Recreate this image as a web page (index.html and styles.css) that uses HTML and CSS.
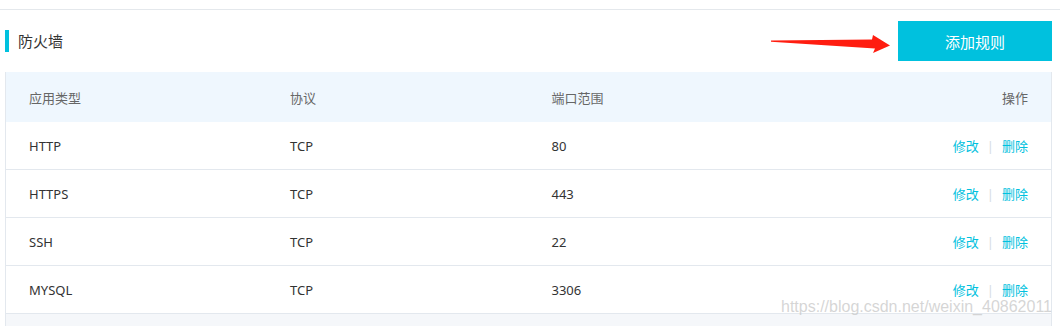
FILE: index.html
```html
<!DOCTYPE html>
<html lang="zh-CN">
<head>
  <meta charset="UTF-8">
  <title>防火墙</title>
  <link rel="stylesheet" href="styles.css">
</head>
<body>
  <div class="topline"></div>

  <div class="section">
    <div class="section-head">
      <div class="section-title">防火墙</div>
      <div class="head-actions">
        <!-- red pointer arrow -->
        <svg class="arrow" width="122" height="20" viewBox="0 0 122 20">
          <polygon points="1,6.6 102,5.6 103,1 120,11.5 103,19 105,14.5 1,7.8" fill="#ff1d10"/>
        </svg>
        <button class="btn-add">添加规则</button>
      </div>
    </div>

    <table class="rules">
      <thead>
        <tr>
          <th>应用类型</th>
          <th>协议</th>
          <th>端口范围</th>
          <th class="col-ops">操作</th>
        </tr>
      </thead>
      <tbody>
        <tr>
          <td>HTTP</td>
          <td>TCP</td>
          <td>80</td>
          <td class="col-ops"><a>修改</a><span class="sep">|</span><a>删除</a></td>
        </tr>
        <tr>
          <td>HTTPS</td>
          <td>TCP</td>
          <td>443</td>
          <td class="col-ops"><a>修改</a><span class="sep">|</span><a>删除</a></td>
        </tr>
        <tr>
          <td>SSH</td>
          <td>TCP</td>
          <td>22</td>
          <td class="col-ops"><a>修改</a><span class="sep">|</span><a>删除</a></td>
        </tr>
        <tr>
          <td>MYSQL</td>
          <td>TCP</td>
          <td>3306</td>
          <td class="col-ops"><a>修改</a><span class="sep">|</span><a>删除</a></td>
        </tr>
      </tbody>
    </table>
    <div class="rules-foot"></div>
  </div>

  <div class="watermark">https://blog.csdn.net/weixin_40862011</div>
</body>
</html>
```

FILE: styles.css
```css
body {
  margin: 0;
  font-family: "Noto Sans", "Noto Sans CJK SC", sans-serif;
  font-size: 13px;
  color: #333;
  background: #fff;
  overflow: hidden;
}

.topline {
  height: 9px;
  border-bottom: 1px solid #e4e8ec;
}

.section {
  padding: 0 8px 0 5px;
}

.section-head {
  display: flex;
  justify-content: space-between;
  align-items: center;
  height: 62px;
}

.section-title {
  border-left: 4px solid #00c1de;
  height: 22px;
  line-height: 22px;
  padding-left: 9px;
  font-size: 15px;
  color: #333;
}

.head-actions {
  display: flex;
  align-items: center;
}

.arrow {
  display: block;
  margin-right: 6px;
  margin-top: 6px;
}

.btn-add {
  width: 154px;
  height: 40px;
  border: none;
  background: #00c1de;
  color: #fff;
  font-family: "Noto Sans CJK SC", sans-serif;
  font-size: 15px;
  cursor: pointer;
}

.rules {
  width: 100%;
  border-collapse: collapse;
  table-layout: fixed;
  border-left: 1px solid #e3e8ee;
  border-right: 1px solid #e3e8ee;
}

.rules th {
  height: 50px;
  padding: 0 0 0 23px;
  background: #eff7fe;
  color: #666;
  font-weight: normal;
  text-align: left;
}

.rules td {
  height: 47px;
  padding: 0 0 0 23px;
  border-bottom: 1px solid #e3e8ee;
}

.rules .col-ops {
  text-align: right;
  padding: 0 23px 0 0;
}

.col-ops a {
  color: #00c1de;
  cursor: pointer;
}

.sep {
  color: #d6dde3;
  margin: 0 8px;
}

.rules-foot {
  height: 12px;
  background: #f5f7fa;
  border-left: 1px solid #e3e8ee;
  border-right: 1px solid #e3e8ee;
}

.watermark {
  position: absolute;
  left: 781px;
  top: 298px;
  font-family: "Liberation Sans", sans-serif;
  font-size: 16px;
  color: rgba(200, 200, 200, 0.75);
  white-space: nowrap;
}
```
